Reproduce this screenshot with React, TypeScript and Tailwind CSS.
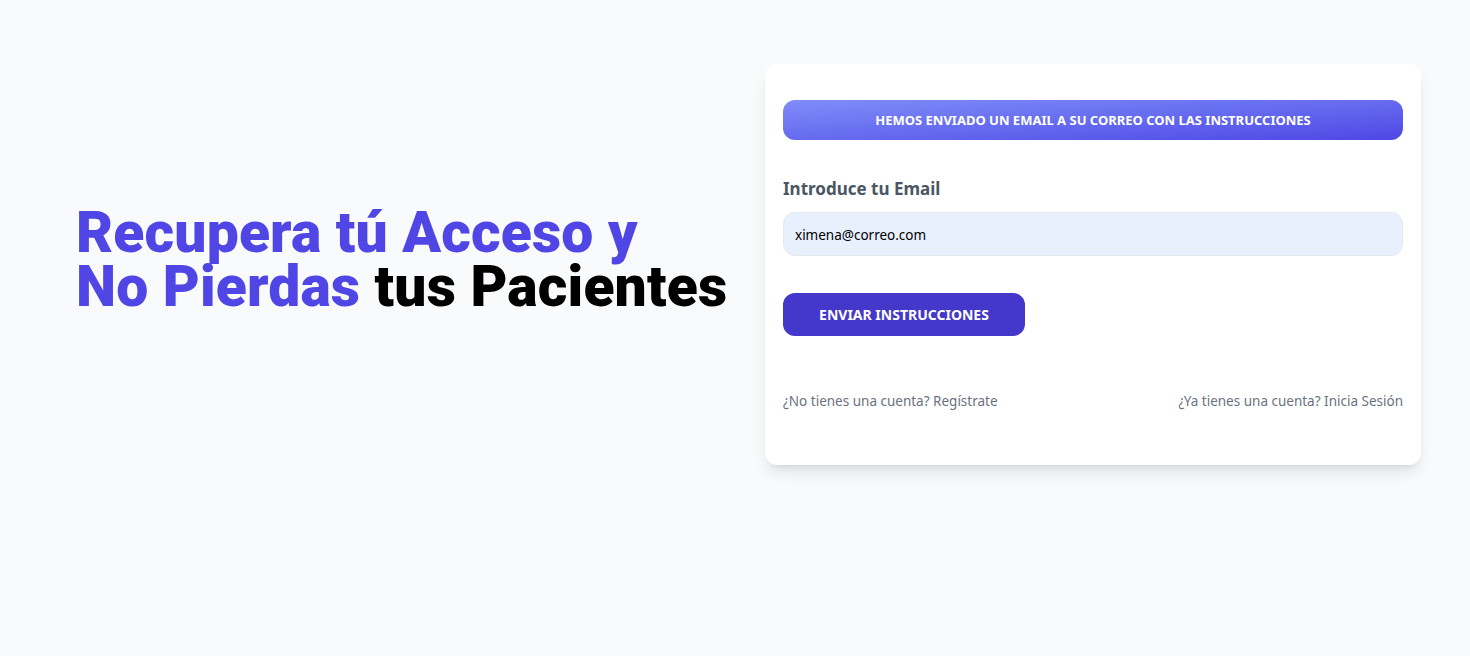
import React from "react";

export default function App() {
  return (
    <div
      className="min-h-[656px] w-full bg-[#f9fafb]"
      style={{ fontFamily: '"Noto Sans", "Open Sans", sans-serif' }}
    >
      <div className="flex items-center pl-[76px] pr-[49px] pt-[64px]">
        <div className="w-[689px] shrink-0 pb-[10px]">
          <h1
            className="whitespace-nowrap text-[57px] leading-[54px] font-black tracking-[0.15px] text-[#4f46e5]"
            style={{ fontFamily: 'Roboto, "Noto Sans", sans-serif' }}
          >
            Recupera tú Acceso y
            <br />
            No Pierdas <span className="text-black">tus Pacientes</span>
          </h1>
        </div>
        <div className="w-[656px] shrink-0 rounded-xl bg-white px-[18px] pt-[36px] pb-[36px] shadow-lg">
          <div className="flex h-[40px] items-center justify-center rounded-xl bg-gradient-to-br from-[#818cf8] to-[#4f46e5] pt-[1px] text-[13px] font-bold uppercase text-white">
            Hemos enviado un email a su correo con las instrucciones
          </div>
          <div className="mt-[37px]">
            <label className="block text-[17px] font-bold leading-[24px] text-[#4b5563]">
              Introduce tu Email
            </label>
            <div className="mt-[11px] flex h-[44px] items-center rounded-xl border border-[#e5e7eb] bg-[#e8f0fe] px-[11px] pt-[2px] text-[13.5px] text-black">
              ximena@correo.com
            </div>
          </div>
          <button className="mt-[37px] flex h-[43px] w-[242px] items-center justify-center rounded-xl bg-[#4338ca] text-[14px] font-bold uppercase text-white">
            Enviar Instrucciones
          </button>
          <div className="mt-[55px] flex justify-between text-[13.5px] leading-[20px] text-[#6b7280]">
            <span>¿No tienes una cuenta? Regístrate</span>
            <span>¿Ya tienes una cuenta? Inicia Sesión</span>
          </div>
          <div className="h-[18px]" />
        </div>
      </div>
    </div>
  );
}
